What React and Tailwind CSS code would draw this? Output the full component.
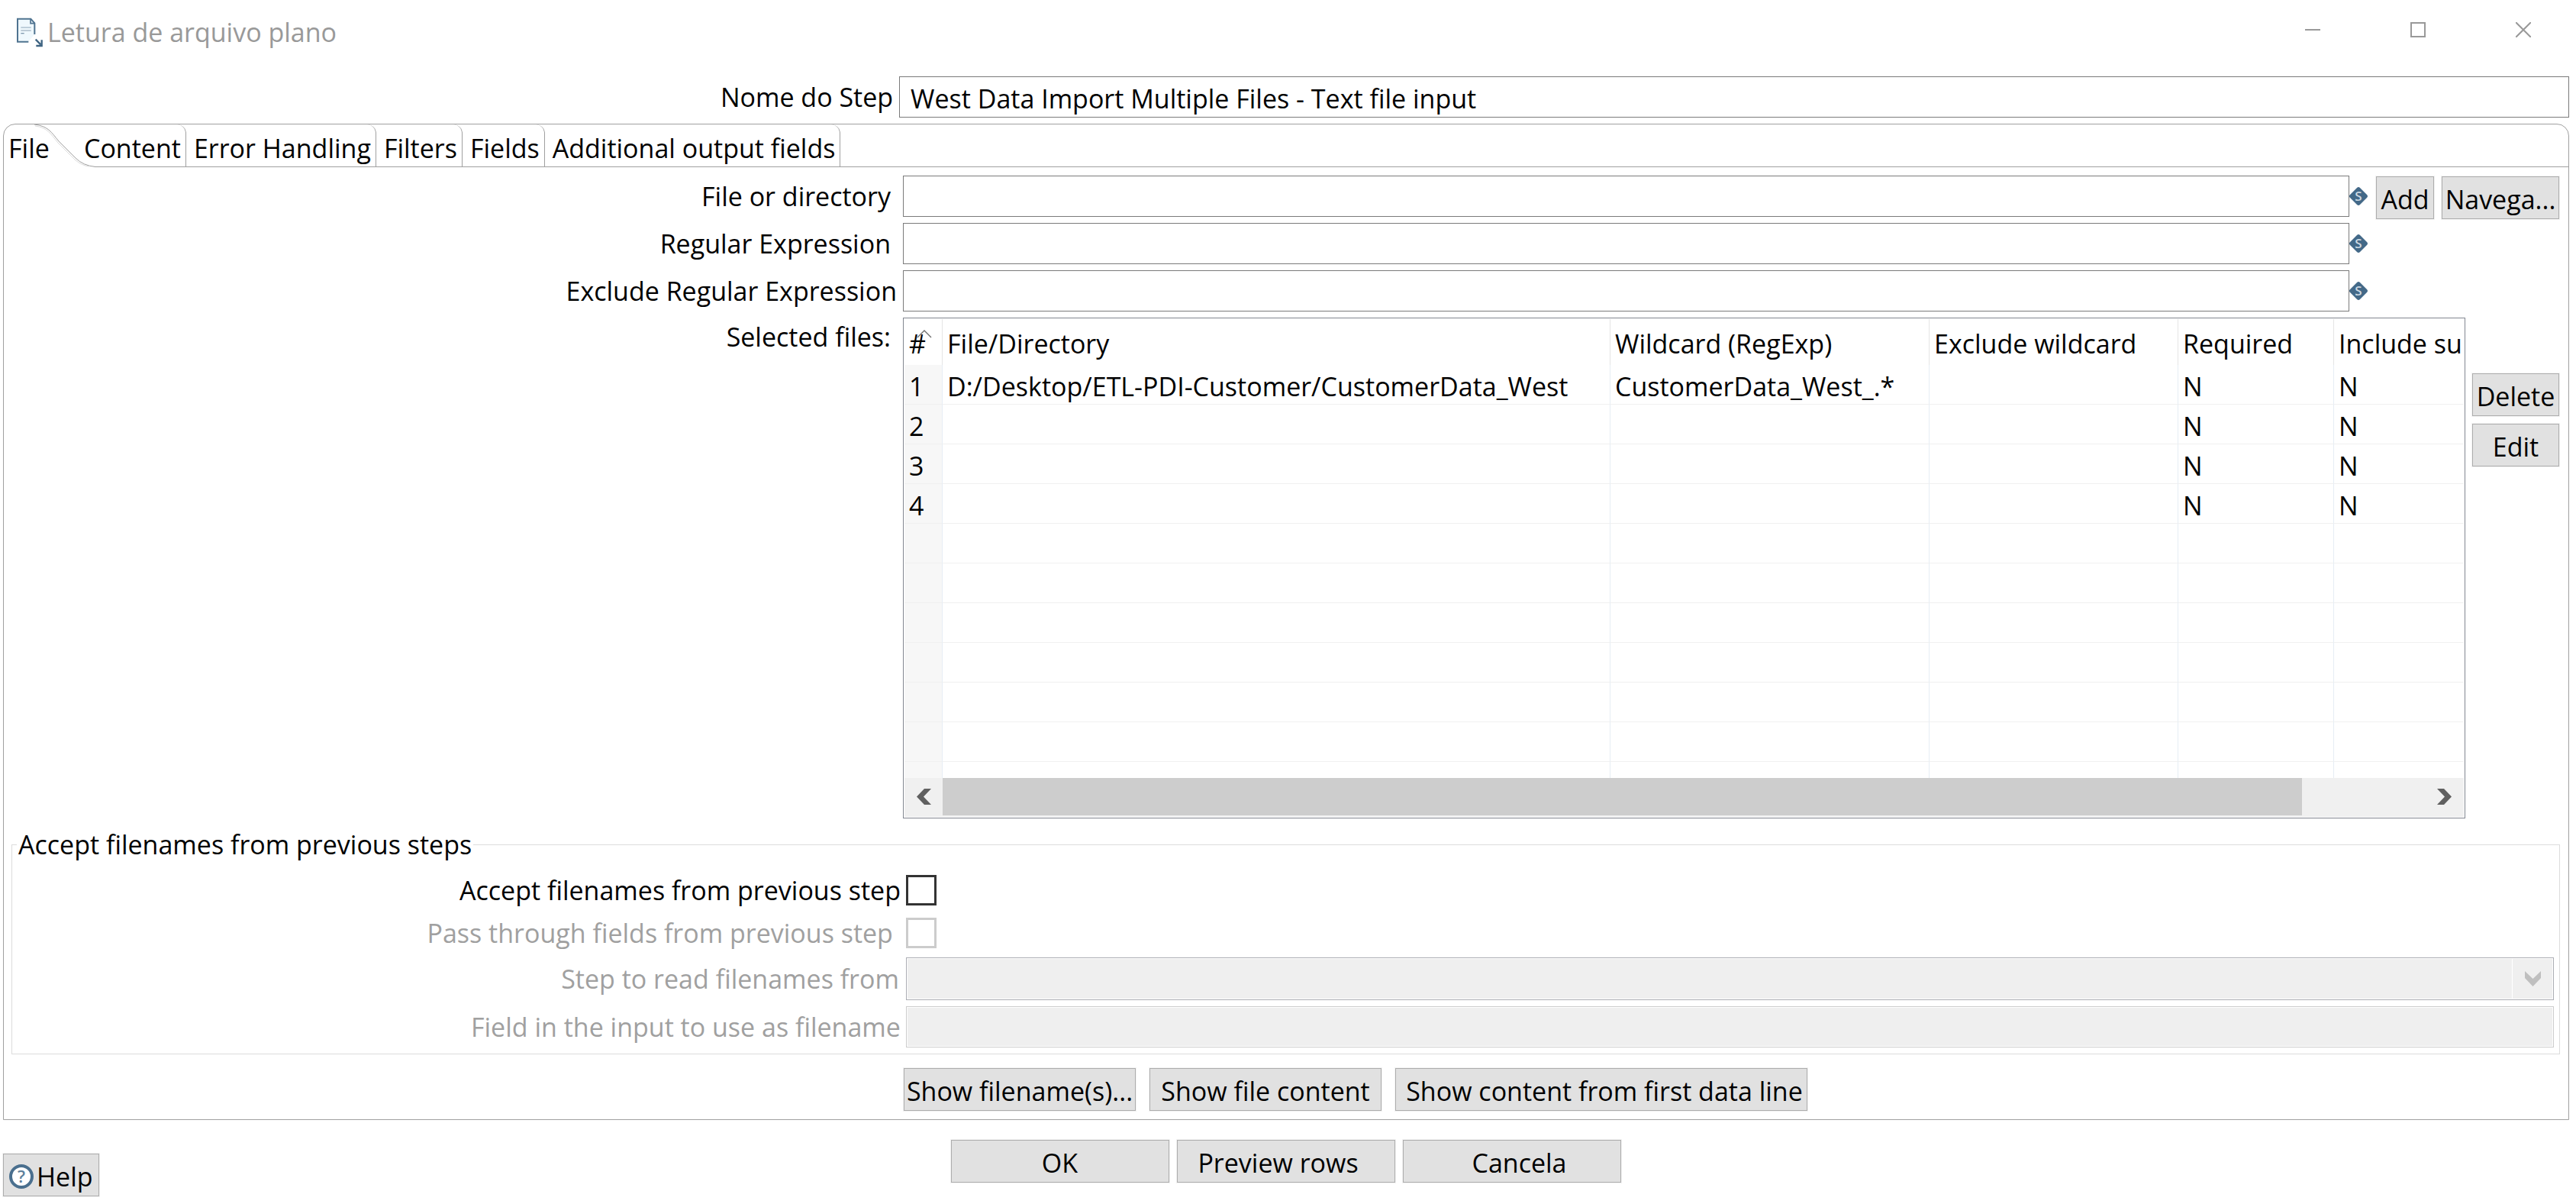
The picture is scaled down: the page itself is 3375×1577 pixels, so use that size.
const button =
  "h-14 shrink-0 whitespace-nowrap border border-[#adadad] bg-[#e1e1e1] pt-1 text-center text-black ring-1 ring-[#f3f3f3]";
const textBox = "h-[54px] min-w-0 flex-1 border border-[#7a7a7a] bg-white px-3.5 pt-1 text-black outline-none";

function DocumentIcon() {
  return (
    <svg width="38" height="42" viewBox="30 30 114 126" fill="none" aria-hidden="true">
      <path d="M39 42H91L106 58V102L82 130H39Z" fill="#eff8fd" />
      <path d="M82 131H39V41H91L106 58V102" stroke="#4f7390" strokeWidth="6" />
      <path d="M90 41V59H107" stroke="#4f7390" strokeWidth="5" />
      <path d="M52 75H92" stroke="#8ea6b8" strokeWidth="3" />
      <path d="M52 87H92" stroke="#bccbd6" strokeWidth="6" />
      <path d="M52 98H65" stroke="#7d98ad" strokeWidth="4" />
      <path d="M110 122L130 142M134 124V147H112" stroke="#3f6482" strokeWidth="7" />
    </svg>
  );
}

function VariableIcon() {
  return (
    <svg width="24" height="24" viewBox="0 0 24 24" className="shrink-0" aria-hidden="true">
      <path d="M10 1Q12 -1 14 1L23 10Q25 12 23 14L14 23Q12 25 10 23L1 14Q-1 12 1 10Z" fill="#436988" />
      <text x="12" y="18" textAnchor="middle" fontFamily="Open Sans, sans-serif" fontSize="17" fontWeight="600" fill="#cfdae3">
        S
      </text>
    </svg>
  );
}

function HelpIcon() {
  return (
    <svg width="32" height="32" viewBox="0 0 32 32" aria-hidden="true">
      <circle cx="16" cy="16" r="14" fill="#fff" stroke="#4a6f8e" strokeWidth="4" />
      <text x="16" y="24" textAnchor="middle" fontFamily="Open Sans, sans-serif" fontSize="22" fontWeight="600" fill="#5d7f9b">
        ?
      </text>
    </svg>
  );
}

function FieldRow({ id, label, tight }) {
  return (
    <div className="flex items-center">
      <label htmlFor={id} className={(tight ? "pr-2" : "pr-4") + " w-[1178px] shrink text-right"}>
        {label}
      </label>
      <input id={id} type="text" className={textBox} />
      <VariableIcon />
    </div>
  );
}

const tabs = ["Content", "Error Handling", "Filters", "Fields", "Additional output fields"];

function TabStrip() {
  return (
    <div role="tablist" className="flex h-14 border-b border-[#a0a0a0]">
      <button role="tab" aria-selected="true" className="relative w-[101px] shrink-0 pl-1.5 pt-1.5 text-left">
        <svg className="absolute left-0 top-0" width="124" height="56" viewBox="0 0 124 56" fill="none" aria-hidden="true">
          <path d="M0 20L20 0H40C58 2 62 10 72 22L94 44Q104 54 120 55.5V56H0Z" fill="#fff" />
          <path d="M40 0C58 2 62 10 72 22L94 44Q104 54 120 55.5H124" stroke="#a0a0a0" />
          <path d="M41 2C57 4 61 12 71 24L93 46Q102 54 112 55" stroke="#dcdcdc" />
        </svg>
        <span className="relative">File</span>
      </button>
      {tabs.map((tab, i) => (
        <button
          key={tab}
          role="tab"
          aria-selected="false"
          className={(i === 0 ? "pl-1" : "pl-2.5") + " relative whitespace-nowrap rounded-tr-xl border-r border-[#a0a0a0] pr-1.5 pt-1.5"}
        >
          {tab}
        </button>
      ))}
    </div>
  );
}

const files = [
  ["1", "D:/Desktop/ETL-PDI-Customer/CustomerData_West", "CustomerData_West_.*", "", "N", "N"],
  ["2", "", "", "", "N", "N"],
  ["3", "", "", "", "N", "N"],
  ["4", "", "", "", "N", "N"],
  ...Array.from({ length: 7 }, () => ["", "", "", "", "", ""]),
];
const columns = ["File/Directory", "Wildcard (RegExp)", "Exclude wildcard", "Required", "Include subfolders"];

function FilesTable() {
  return (
    <div className="min-w-0 flex-1 border border-[#828790] p-px">
      <div className="h-[601px] overflow-hidden">
        <table className="w-[2173px] table-fixed border-separate border-spacing-0 text-left">
          <colgroup>
            <col className="w-[50px]" />
            <col className="w-[875px]" />
            <col className="w-[418px]" />
            <col className="w-[326px]" />
            <col className="w-[204px]" />
            <col className="w-[300px]" />
          </colgroup>
          <thead>
            <tr className="h-[60px]">
              <th className="relative border-r border-[#e5e5e5] pl-1.5 pt-1 font-normal">
                #
                <svg className="absolute left-4 top-3.5" width="20" height="11" viewBox="0 0 20 11" fill="none" aria-hidden="true">
                  <path d="M1 10L10 1L19 10" stroke="#6b6b6b" strokeWidth="1.3" />
                </svg>
              </th>
              {columns.map((c) => (
                <th key={c} className="whitespace-nowrap border-r border-[#e5e5e5] pl-1.5 pt-1 font-normal">
                  {c}
                </th>
              ))}
            </tr>
          </thead>
          <tbody>
            {files.map((row, r) => (
              <tr key={r} className="h-[52px]">
                {row.map((cell, c) => (
                  <td
                    key={c}
                    className={
                      (c === 0 ? "bg-[#f7f7f7] " : "") +
                      "whitespace-nowrap border-b border-r border-b-[#f0f0f0] border-r-[#e6edf4] pl-1.5 pt-1"
                    }
                  >
                    {cell}
                  </td>
                ))}
              </tr>
            ))}
          </tbody>
        </table>
      </div>
      <div className="flex h-[51px] bg-[#f0f0f0] pb-0.5">
        <button aria-label="Scroll left" className="flex w-[50px] shrink-0 items-center justify-center">
          <svg width="20" height="21" viewBox="0 0 20 21" aria-hidden="true">
            <path d="M11 0H20L10 10.5L20 21H11L1 10.5Z" fill="#606060" />
          </svg>
        </button>
        <div className="min-w-0 flex-1">
          <div className="h-full w-11/12 bg-[#cdcdcd]" />
        </div>
        <button aria-label="Scroll right" className="flex w-[50px] shrink-0 items-center justify-center">
          <svg width="20" height="21" viewBox="0 0 20 21" aria-hidden="true">
            <path d="M9 0H0L10 10.5L0 21H9L19 10.5Z" fill="#606060" />
          </svg>
        </button>
      </div>
    </div>
  );
}

function PreviousSteps() {
  const row = "grid grid-cols-[35%_minmax(0,1fr)] items-center gap-x-[3px]";
  return (
    <fieldset className="ml-2.5 mr-[11px] mt-2.5 border border-[#dcdcdc] pb-2">
      <legend className="ml-1.5 px-0.5 leading-[48px]">Accept filenames from previous steps</legend>
      <div className={row + " pt-4"}>
        <label htmlFor="accept" className="pr-1 text-right leading-10">
          Accept filenames from previous step
        </label>
        <input id="accept" type="checkbox" className="size-10 appearance-none border-3 border-[#333]" />
      </div>
      <div className={row + " pt-4 text-[#a0a0a0]"}>
        <label htmlFor="pass" className="pr-3.5 text-right leading-10">
          Pass through fields from previous step
        </label>
        <input id="pass" type="checkbox" disabled className="size-10 appearance-none border-3 border-[#ccc]" />
      </div>
      <div className={row + " pt-3 text-[#a0a0a0]"}>
        <label htmlFor="step" className="pr-1.5 text-right">
          Step to read filenames from
        </label>
        <div className="relative mr-[7px] flex h-14 border border-[#abadb3] p-px">
          <select id="step" disabled className="w-full appearance-none bg-[#efefef]" />
          <div className="pointer-events-none absolute inset-y-0 right-px flex w-[53px] items-center justify-center border-l border-white">
            <svg width="21" height="20" viewBox="0 0 21 20" aria-hidden="true">
              <path d="M0 0L10.5 10L21 0V9L10.5 20L0 9Z" fill="#bfbfbf" />
            </svg>
          </div>
        </div>
      </div>
      <div className={row + " pt-2 text-[#a0a0a0]"}>
        <label htmlFor="field" className="pr-1 text-right">
          Field in the input to use as filename
        </label>
        <div className="mr-[7px] flex h-[54px] border border-[#ccc] p-px">
          <input id="field" type="text" disabled className="w-full bg-[#efefef] px-3" />
        </div>
      </div>
    </fieldset>
  );
}

export default function App() {
  return (
    <div className="min-h-screen overflow-hidden bg-white font-['Open_Sans',sans-serif] text-[34px] leading-[46px] text-black">
      <header className="flex h-[84px] items-center text-[#999]">
        <div className="pl-5">
          <DocumentIcon />
        </div>
        <h1 className="flex-1 pl-1">Letura de arquivo plano</h1>
        <div className="flex gap-[118px] pb-1.5 pr-[59px]">
          <button aria-label="Minimize">
            <svg width="20" height="20" viewBox="0 0 20 20" stroke="#999" strokeWidth="2" aria-hidden="true">
              <path d="M0 10H20" />
            </svg>
          </button>
          <button aria-label="Maximize">
            <svg width="20" height="20" viewBox="0 0 20 20" stroke="#999" strokeWidth="2" fill="none" aria-hidden="true">
              <path d="M1 1H19V19H1Z" />
            </svg>
          </button>
          <button aria-label="Close">
            <svg width="20" height="20" viewBox="0 0 20 20" stroke="#999" strokeWidth="2" aria-hidden="true">
              <path d="M0 0L20 20M20 0L0 20" />
            </svg>
          </button>
        </div>
      </header>

      <div className="flex items-center pr-[9px] pt-4">
        <label htmlFor="stepName" className="w-[35%] shrink-0 pr-2 text-right">
          Nome do Step
        </label>
        <input id="stepName" type="text" defaultValue="West Data Import Multiple Files - Text file input" className={textBox} />
      </div>

      <main className="ml-1 mr-[9px] mt-2 rounded-t-2xl border border-[#a0a0a0]">
        <TabStrip />
        <section className="pt-[11px]">
          <div className="flex">
            <div className="flex min-w-0 flex-1 flex-col gap-2">
              <FieldRow id="file" label="File or directory" />
              <FieldRow id="regexp" label="Regular Expression" />
              <FieldRow id="exclude" label="Exclude Regular Expression" tight />
            </div>
            <div className="flex items-start gap-2.5 pl-[11px] pr-3 pt-px">
              <button className={button + " w-[76px]"}>Add</button>
              <button className={button + " w-[154px]"}>Navega...</button>
            </div>
          </div>

          <div className="flex pr-3 pt-2">
            <div className="w-[1178px] shrink pr-4 pt-0.5 text-right">Selected files:</div>
            <FilesTable />
            <div className="ml-[9px] flex flex-col gap-2.5 pt-[73px]">
              <button className={button + " w-[114px]"}>Delete</button>
              <button className={button + " w-[114px]"}>Edit</button>
            </div>
          </div>

          <PreviousSteps />

          <div className="flex pb-[11px] pt-[18px]">
            <div className="w-[35%] shrink-0" />
            <div className="flex gap-[18px] pl-[3px]">
              <button className={button + " w-[304px]"}>Show filename(s)...</button>
              <button className={button + " w-[304px]"}>Show file content</button>
              <button className={button + " w-[540px] pl-2"}>Show content from first data line</button>
            </div>
          </div>
        </section>
      </main>

      <footer className="grid grid-cols-[1fr_auto_1fr] pl-1 pr-2.5 pt-[26px]">
        <div className="pt-[18px]">
          <button className={button + " flex w-[126px] items-center gap-1 pl-[7px]"}>
            <HelpIcon />
            Help
          </button>
        </div>
        <div className="flex gap-2.5">
          <button className={button + " w-[286px]"}>OK</button>
          <button className={button + " w-[286px] pr-5"}>Preview rows</button>
          <button className={button + " w-[286px] pl-5"}>Cancela</button>
        </div>
      </footer>
    </div>
  );
}
